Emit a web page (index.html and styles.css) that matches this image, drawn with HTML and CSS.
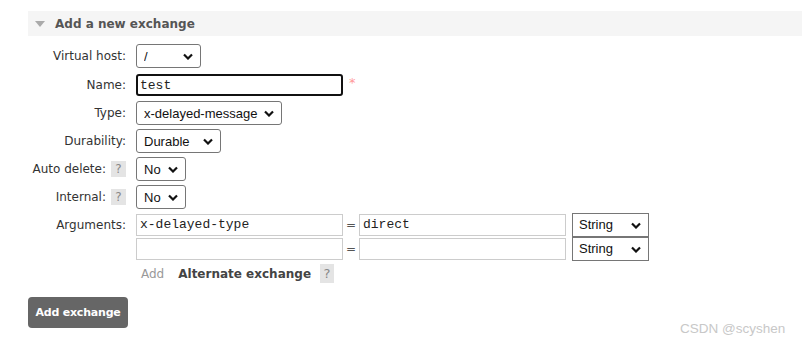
FILE: index.html
```html
<!DOCTYPE html>
<html lang="en">
<head>
    <meta charset="UTF-8">
    <title>Add a new exchange</title>
    <link rel="stylesheet" href="styles.css">
</head>
<body>
    <div class="section">
        <h2 class="section-title"><span class="arrow"></span>Add a new exchange</h2>

        <div class="form">
            <label class="label">Virtual host:</label>
            <div class="field">
                <span class="select" style="width: 65px;"><select><option>/</option></select>
                    <svg viewBox="0 0 10 6"><path d="M1 1l4 4 4-4"/></svg></span>
            </div>

            <label class="label">Name:</label>
            <div class="field">
                <input type="text" class="text focused" value="test">
                <span class="mandatory">*</span>
            </div>

            <label class="label">Type:</label>
            <div class="field">
                <span class="select" style="width: 146px;"><select><option>x-delayed-message</option></select>
                    <svg viewBox="0 0 10 6"><path d="M1 1l4 4 4-4"/></svg></span>
            </div>

            <label class="label">Durability:</label>
            <div class="field">
                <span class="select" style="width: 85px;"><select><option>Durable</option></select>
                    <svg viewBox="0 0 10 6"><path d="M1 1l4 4 4-4"/></svg></span>
            </div>

            <label class="label">Auto delete: <span class="help">?</span></label>
            <div class="field">
                <span class="select" style="width: 50px;"><select><option>No</option></select>
                    <svg viewBox="0 0 10 6"><path d="M1 1l4 4 4-4"/></svg></span>
            </div>

            <label class="label">Internal: <span class="help">?</span></label>
            <div class="field">
                <span class="select" style="width: 50px;"><select><option>No</option></select>
                    <svg viewBox="0 0 10 6"><path d="M1 1l4 4 4-4"/></svg></span>
            </div>

            <label class="label label-top">Arguments:</label>
            <div class="field args">
                <div class="arg-row">
                    <input type="text" class="arg" value="x-delayed-type">
                    <span class="eq">=</span>
                    <input type="text" class="arg" value="direct">
                    <span class="select select-arg" style="width: 77px;"><select><option>String</option></select>
                        <svg viewBox="0 0 10 6"><path d="M1 1l4 4 4-4"/></svg></span>
                </div>
                <div class="arg-row">
                    <input type="text" class="arg" value="">
                    <span class="eq">=</span>
                    <input type="text" class="arg" value="">
                    <span class="select select-arg" style="width: 77px;"><select><option>String</option></select>
                        <svg viewBox="0 0 10 6"><path d="M1 1l4 4 4-4"/></svg></span>
                </div>
                <div class="arg-links">
                    <span class="add-link">Add</span>
                    <span class="alt-link">Alternate exchange</span>
                    <span class="help help-big">?</span>
                </div>
            </div>
        </div>

        <button class="submit">Add exchange</button>
    </div>

    <div class="watermark">CSDN @scyshen</div>
</body>
</html>
```

FILE: styles.css
```css
* {
    margin: 0;
    padding: 0;
    box-sizing: border-box;
}

body {
    font-family: "DejaVu Sans", Verdana, sans-serif;
    font-size: 12px;
    color: #444;
    background: #fff;
    width: 802px;
    height: 344px;
    position: relative;
    overflow: hidden;
}

.section {
    padding: 11px 0 0 28px;
}

.section-title {
    display: flex;
    align-items: center;
    height: 25px;
    background: #f5f5f5;
    font-size: 12px;
    font-weight: bold;
    color: #555;
    padding-left: 7px;
}

.arrow {
    width: 0;
    height: 0;
    border-left: 5px solid transparent;
    border-right: 5px solid transparent;
    border-top: 6px solid #aaa;
    margin-right: 10px;
}

.form {
    display: grid;
    grid-template-columns: 98px 1fr;
    column-gap: 10px;
    row-gap: 4px;
    margin-top: 8px;
}

.label {
    display: flex;
    align-items: center;
    justify-content: flex-end;
    color: #333;
    white-space: nowrap;
}

.label-top {
    align-items: flex-start;
    padding-top: 5px;
}

.field {
    display: flex;
    align-items: center;
}

.help {
    display: inline-block;
    width: 15px;
    height: 16px;
    line-height: 16px;
    text-align: center;
    background: #e4e4e4;
    color: #888;
    margin-left: 5px;
    font-size: 12px;
}

.help-big {
    width: 14px;
    height: 19px;
    line-height: 19px;
    font-size: 13px;
    margin-left: 9px;
}

.select {
    position: relative;
    display: inline-block;
    height: 24px;
}

.select select {
    appearance: none;
    width: 100%;
    height: 100%;
    border: 1px solid #767676;
    border-radius: 3px;
    background: #fff;
    font-family: "Liberation Sans", Arial, sans-serif;
    font-size: 13px;
    color: #111;
    padding: 0 20px 0 7px;
}

.select svg {
    position: absolute;
    right: 8px;
    top: 9px;
    width: 10px;
    height: 7px;
    fill: none;
    stroke: #111;
    stroke-width: 2.2;
}

.select-arg {
    margin-left: 6px;
}

.select-arg select {
    border-radius: 0;
    padding-left: 6px;
}

.text {
    width: 207px;
    height: 22px;
    border: 1px solid #ccc;
    font-family: "Liberation Mono", "Courier New", monospace;
    font-size: 13px;
    color: #222;
    padding: 0 3px;
    outline: none;
}

.focused {
    border: 2px solid #111;
    border-radius: 3px;
    padding: 0 2px;
}

.mandatory {
    color: #f99;
    font-size: 13px;
    margin-left: 6px;
    align-self: flex-start;
    margin-top: 1px;
}

.field:nth-child(4) {
    margin: 2px 0 1px;
}

.args {
    flex-direction: column;
    align-items: flex-start;
    gap: 1px;
}

.arg-row {
    display: flex;
    align-items: center;
    height: 23px;
}

.arg {
    width: 207px;
    height: 22px;
    border: 1px solid #ccc;
    font-family: "Liberation Mono", "Courier New", monospace;
    font-size: 13px;
    color: #222;
    padding: 0 3px;
}

.eq {
    width: 16px;
    text-align: center;
    color: #555;
}

.arg-links {
    display: flex;
    align-items: center;
    margin-top: 3px;
    height: 19px;
}

.add-link {
    color: #999;
    margin-left: 5px;
    margin-right: 14px;
}

.alt-link {
    font-size: 12px;
    font-weight: bold;
    color: #444;
}

.submit {
    margin-top: 14px;
    width: 100px;
    height: 31px;
    border: none;
    border-radius: 4px;
    background: #666;
    color: #fff;
    font-family: "DejaVu Sans", Verdana, sans-serif;
    font-size: 11px;
    font-weight: bold;
    letter-spacing: -0.2px;
}

.watermark {
    position: absolute;
    left: 680px;
    top: 321px;
    font-family: "Liberation Sans", Arial, sans-serif;
    font-size: 13.5px;
    color: #c8c8c8;
}
```
